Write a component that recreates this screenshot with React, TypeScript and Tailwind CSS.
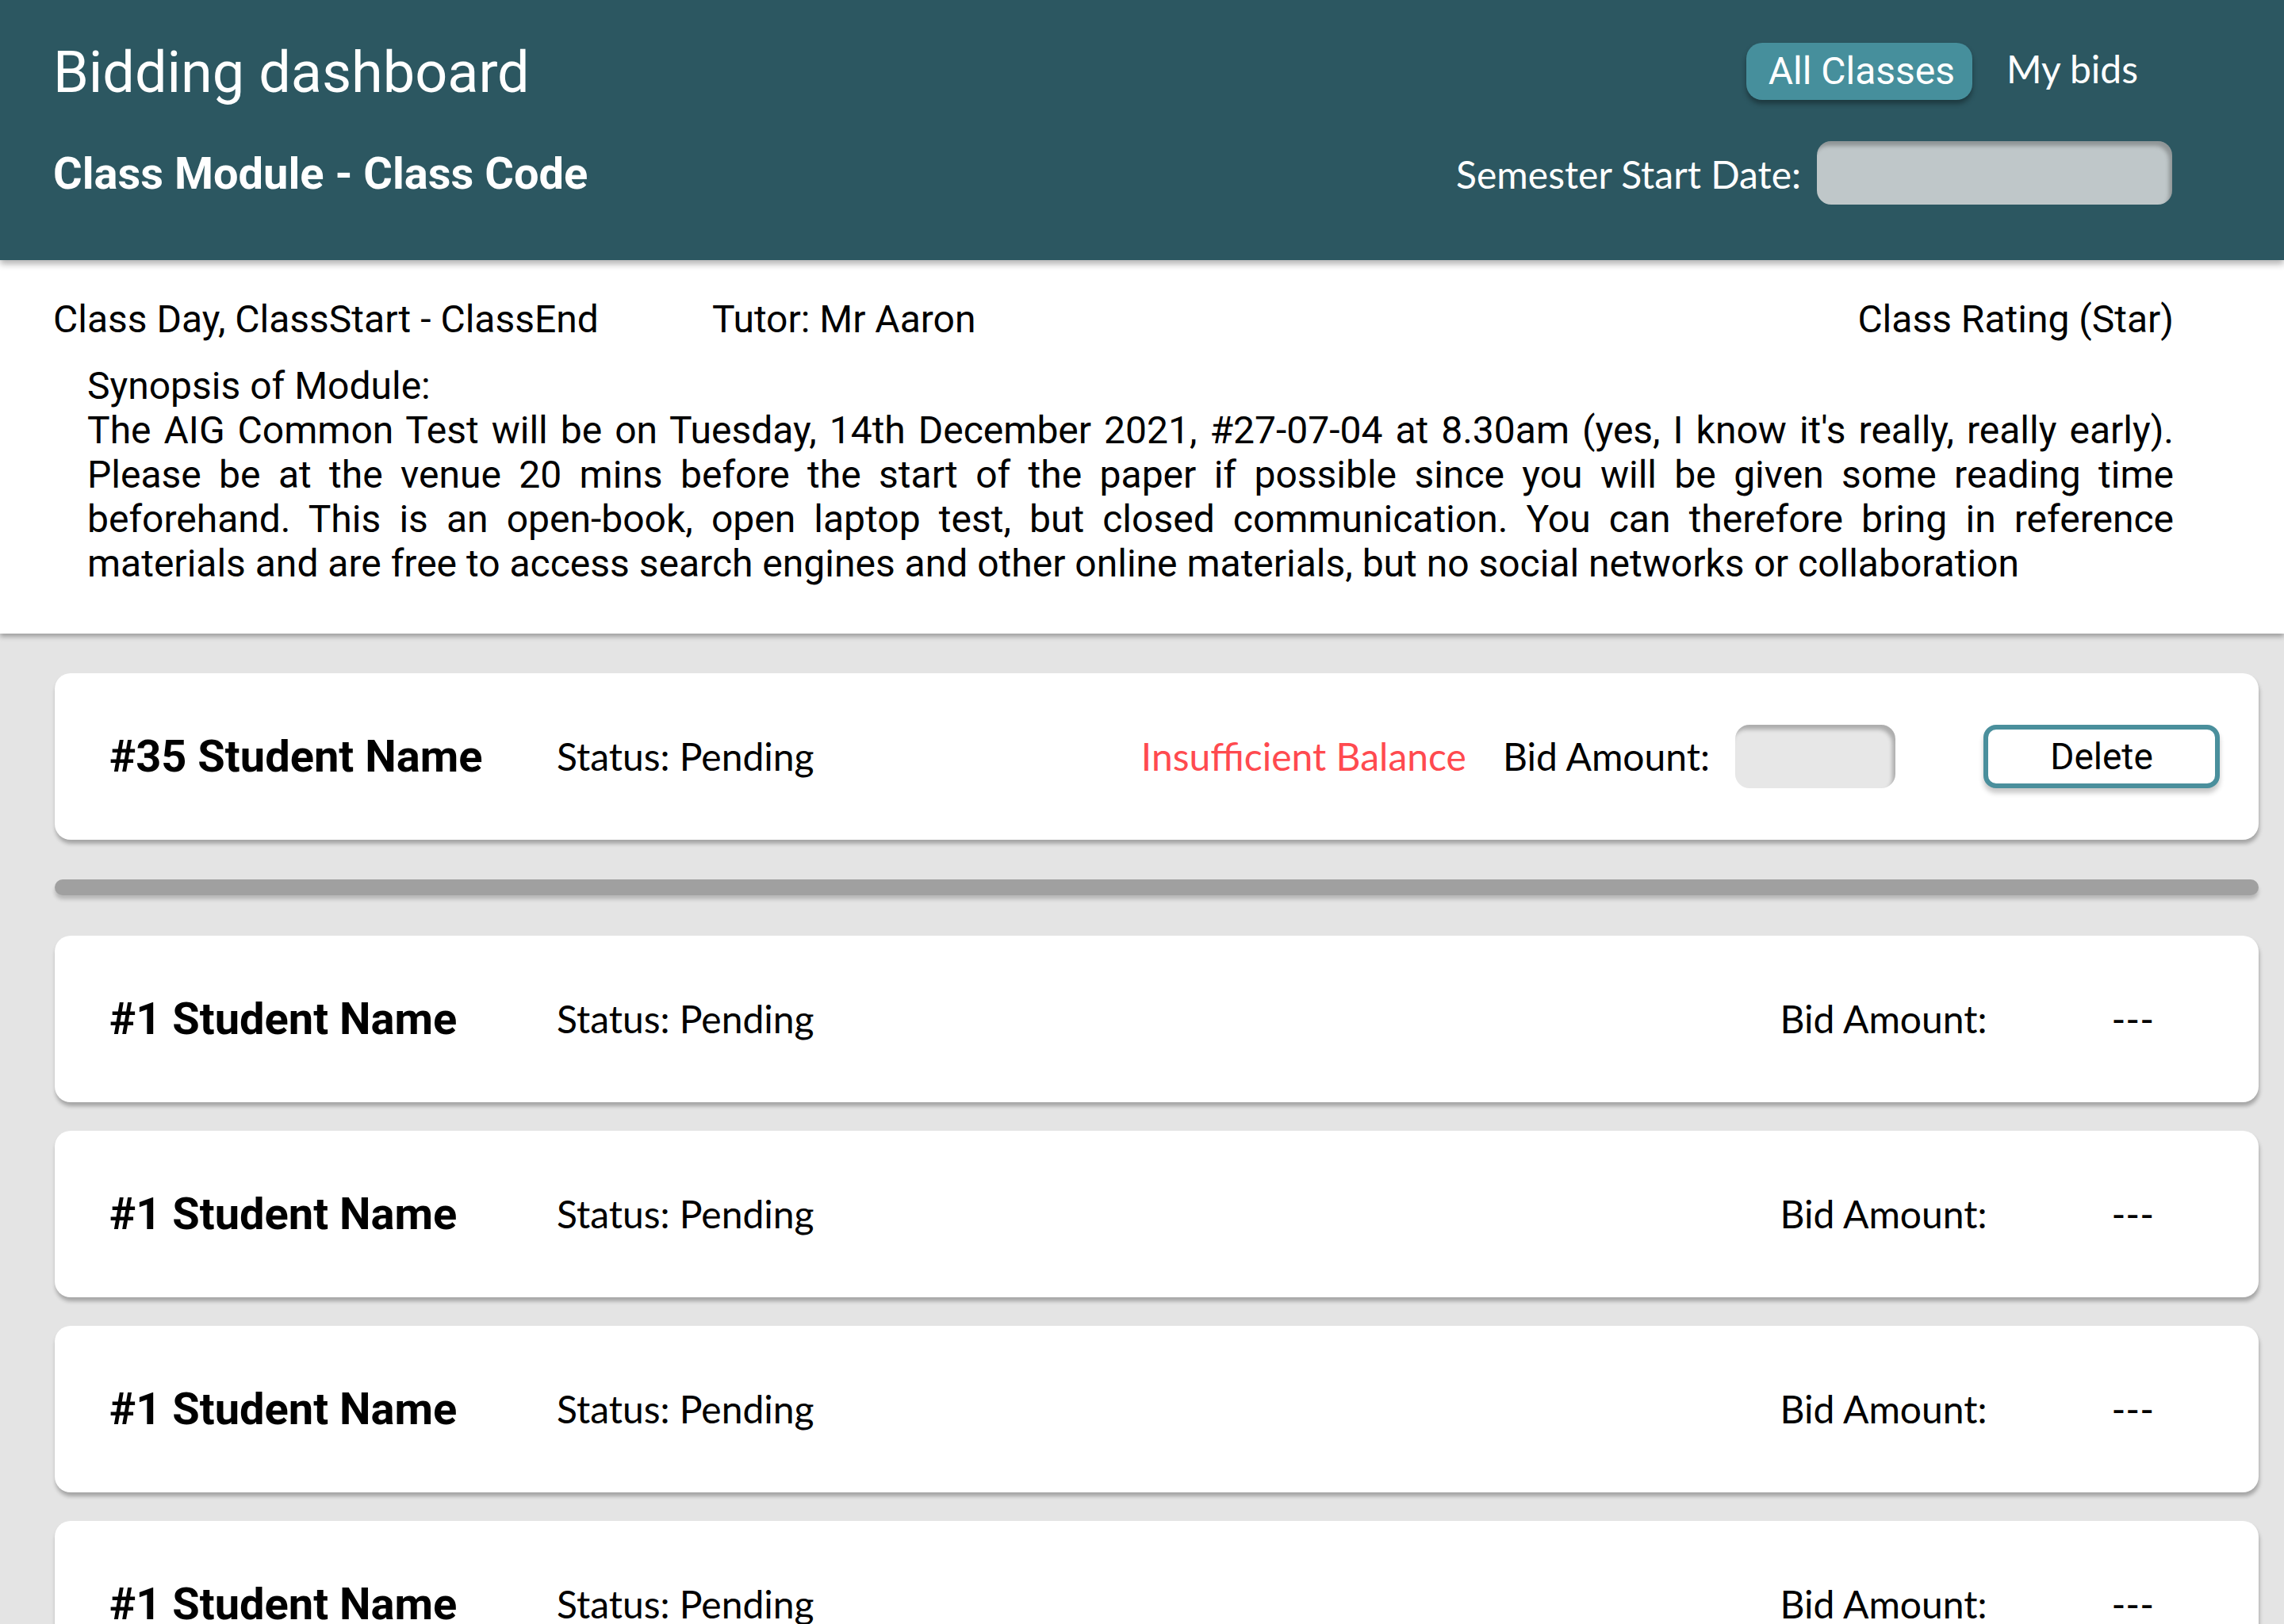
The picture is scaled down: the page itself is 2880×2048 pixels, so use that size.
const synopsis =
  "The AIG Common Test will be on Tuesday, 14th December 2021, #27-07-04 at 8.30am (yes, I know it's really, really early). Please be at the venue 20 mins before the start of the paper if possible since you will be given some reading time beforehand. This is an open-book, open laptop test, but closed communication. You can therefore bring in reference materials and are free to access search engines and other online materials, but no social networks or collaboration";

function BidRow({ rank }: { rank: number }) {
  return (
    <div className="flex h-[210px] items-center rounded-[20px] bg-white pl-[69px] pr-[132px] shadow-[1px_5px_5px_rgba(0,0,0,0.28)]">
      <div className="w-[564px] font-[Roboto,sans-serif] text-[56px] leading-none font-bold text-black">
        #{rank} Student Name
      </div>
      <div className="font-[Lato,sans-serif] text-[48px] leading-none text-black">Status: Pending</div>
      <div className="ml-auto flex items-center gap-[157px] font-[Lato,sans-serif] text-[48px] leading-none text-black">
        <span>Bid Amount:</span>
        <span>---</span>
      </div>
    </div>
  );
}

export default function App() {
  return (
    <div className="min-h-screen bg-[#e4e4e4]">
      <header className="relative z-20 flex h-[328px] justify-between bg-[#2c5761] pl-[67px] pr-[141px] pt-[56px] text-white shadow-[0_5px_8px_rgba(0,0,0,0.3)]">
        <div>
          <h1 className="font-[Roboto,sans-serif] text-[72px] leading-none font-normal">Bidding dashboard</h1>
          <h2 className="mt-[63px] font-[Roboto,sans-serif] text-[56px] leading-none font-bold">
            Class Module - Class Code
          </h2>
        </div>
        <div className="-mt-[2px] flex flex-col items-end">
          <div className="mr-[43px] flex items-center gap-[43px]">
            <button className="h-[72px] rounded-[20px] bg-[#468f9c] pl-[28px] pr-[22px] font-[Roboto,sans-serif] text-[48px] leading-none text-white shadow-[0_5px_6px_rgba(0,0,0,0.35)]">
              All Classes
            </button>
            <span className="-mt-[6px] font-[Lato,sans-serif] text-[48px] leading-none">My bids</span>
          </div>
          <div className="mt-[52px] flex items-center gap-[20px]">
            <span className="mt-[4px] font-[Lato,sans-serif] text-[48px] leading-none">Semester Start Date:</span>
            <div className="h-[80px] w-[448px] rounded-[18px] bg-[#bfc7c9] shadow-[inset_-4px_6px_5px_rgba(0,0,0,0.25)]" />
          </div>
        </div>
      </header>

      <section className="relative z-10 bg-white pb-[60px] pl-[67px] pr-[139px] pt-[51px] text-black shadow-[0_4px_6px_rgba(0,0,0,0.3)]">
        <div className="flex font-[Roboto,sans-serif] text-[48px] leading-none">
          <span className="w-[831px]">Class Day, ClassStart - ClassEnd</span>
          <span>Tutor: Mr Aaron</span>
          <span className="ml-auto">Class Rating (Star)</span>
        </div>
        <div className="mt-[32px] pl-[43px] font-[Roboto,sans-serif] text-[48px] leading-[56px]">
          <p>Synopsis of Module:</p>
          <p className="text-justify">{synopsis}</p>
        </div>
      </section>

      <main className="flex flex-col pb-[40px] pl-[69px] pr-[32px] pt-[50px]">
        <div className="flex h-[210px] items-center rounded-[20px] bg-white pl-[69px] pr-[49px] shadow-[1px_5px_5px_rgba(0,0,0,0.28)]">
          <div className="w-[564px] font-[Roboto,sans-serif] text-[56px] leading-none font-bold text-black">
            #35 Student Name
          </div>
          <div className="font-[Lato,sans-serif] text-[48px] leading-none text-black">Status: Pending</div>
          <div className="ml-auto flex items-center font-[Lato,sans-serif] text-[48px] leading-none">
            <span className="text-[#ff4a4f]">Insufficient Balance</span>
            <span className="ml-[46px] text-black">Bid Amount:</span>
            <div className="ml-[32px] h-[80px] w-[202px] rounded-[18px] bg-[#e7e7e7] shadow-[inset_-4px_6px_5px_rgba(0,0,0,0.25)]" />
            <button className="ml-[111px] flex h-[80px] w-[298px] items-center justify-center rounded-[16px] border-[6px] border-[#4a8f9c] bg-white font-[Roboto,sans-serif] text-[46px] leading-none text-black shadow-[0_6px_6px_rgba(0,0,0,0.22)]">
              Delete
            </button>
          </div>
        </div>

        <div className="mt-[50px] h-[20px] rounded-full bg-[#a0a0a0] shadow-[0_5px_5px_rgba(0,0,0,0.2)]" />

        <div className="mt-[51px] flex flex-col gap-[36px]">
          <BidRow rank={1} />
          <BidRow rank={1} />
          <BidRow rank={1} />
          <BidRow rank={1} />
        </div>
      </main>
    </div>
  );
}
